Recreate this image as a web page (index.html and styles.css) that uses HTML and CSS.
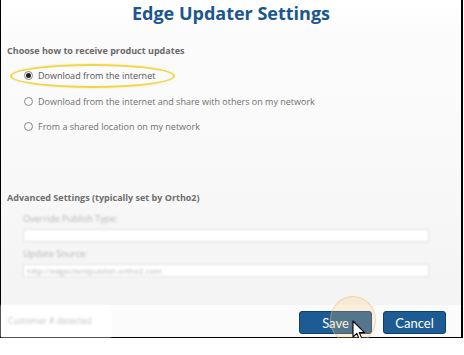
FILE: index.html
```html
<!DOCTYPE html>
<html lang="en">
<head>
    <meta charset="UTF-8">
    <title>Edge Updater Settings</title>
    <link rel="stylesheet" href="styles.css">
</head>
<body>
    <div class="frame">
        <header class="title-bar">
            <h1>Edge Updater Settings</h1>
        </header>

        <div class="content">
            <h2 class="section-title">Choose how to receive product updates</h2>
            <ul class="options">
                <li class="option selected"><span class="radio"></span>Download from the internet</li>
                <li class="option"><span class="radio"></span>Download from the internet and share with others on my network</li>
                <li class="option"><span class="radio"></span>From a shared location on my network</li>
            </ul>
            <div class="highlight"></div>

            <h2 class="section-title advanced">Advanced Settings (typically set by Ortho2)</h2>
            <div class="advanced-fields">
                <label class="field-label">Override Publish Type:</label>
                <div class="field-input"></div>
                <label class="field-label">Update Source:</label>
                <div class="field-input">http://edgeclientpublish.ortho2.com</div>
            </div>
        </div>

        <footer class="footer">
            <div class="status">Customer # detected</div>
            <div class="buttons">
                <button class="btn">Save</button>
                <button class="btn">Cancel</button>
            </div>
            <div class="click-ring"></div>
            <svg class="cursor" width="14" height="22" viewBox="0 0 14 22">
                <path d="M1 1 L1 17 L4.8 13.4 L7.6 20 L10 19 L7.3 12.6 L12.5 12.6 Z" fill="#fff" stroke="#000" stroke-width="1.1" stroke-linejoin="round"/>
            </svg>
        </footer>
    </div>
</body>
</html>
```

FILE: styles.css
```css
/* General Reset */
* {
    margin: 0;
    padding: 0;
    box-sizing: border-box;
}

body {
    font-family: 'Open Sans', 'Noto Sans', Arial, sans-serif;
    background-color: white;
    color: #666;
}

.frame {
    position: relative;
    width: 463px;
    height: 338px;
    border-left: 1px solid #000;
    border-right: 2px solid #000;
    border-bottom: 1px solid #000;
    background: linear-gradient(#ffffff 0, #fbfbfb 40px, #f9f9f9 150px, #f4f4f4 300px);
    display: flex;
    flex-direction: column;
}

.title-bar {
    height: 44px;
    text-align: center;
}

.title-bar h1 {
    font-size: 18px;
    font-weight: 700;
    color: #1b568d;
    line-height: 26px;
}

.content {
    position: relative;
    flex: 1;
    padding: 0 6px;
}

.section-title {
    font-size: 9px;
    font-weight: 700;
    color: #6a6a6a;
    line-height: 14px;
}

.options {
    list-style: none;
    margin-top: 5px;
}

.option {
    display: flex;
    align-items: center;
    font-size: 9px;
    color: #707070;
    height: 25.5px;
    padding-left: 17px;
}

.radio {
    width: 9px;
    height: 9px;
    border: 1px solid #888;
    border-radius: 50%;
    margin-right: 5px;
    display: flex;
    align-items: center;
    justify-content: center;
}

.selected .radio::after {
    content: "";
    width: 5px;
    height: 5px;
    border-radius: 50%;
    background: #222;
}

.selected {
    color: #555;
}

.highlight {
    position: absolute;
    left: 9px;
    top: 20px;
    width: 165px;
    height: 24px;
    border: 2.5px solid #f0d548;
    border-radius: 50%;
    box-shadow: 0 0 2px rgba(240, 210, 60, 0.6);
}

.section-title.advanced {
    margin-top: 51px;
    color: #6e6e6e;
}

.advanced-fields {
    padding: 8px 0 0 16px;
    filter: blur(0.9px);
}

.field-label {
    display: block;
    font-size: 9px;
    color: #b5b5b5;
    line-height: 12px;
    margin-bottom: 4px;
}

.field-input {
    width: 406px;
    height: 13px;
    background: white;
    border: 1px solid #e2e2e2;
    font-size: 8px;
    color: #b8b8b8;
    padding-left: 3px;
    line-height: 11px;
    margin-bottom: 6px;
}

.footer {
    position: relative;
    height: 32px;
    display: flex;
    justify-content: space-between;
    align-items: center;
    background: #fbfbfb;
}

.status {
    width: 110px;
    height: 100%;
    background: #ffffff;
    font-size: 8.5px;
    color: #c4c4c4;
    padding: 10px 0 0 7px;
    filter: blur(1px);
}

.buttons {
    display: flex;
    gap: 11px;
    padding-right: 15px;
    padding-top: 3px;
}

.btn {
    font-family: Lato, 'Open Sans', Arial, sans-serif;
    font-size: 13px;
    color: white;
    background-color: #1d5b93;
    border: 1px solid #0f3f6e;
    border-radius: 3px;
    height: 23px;
}

.btn:first-child {
    width: 73px;
}

.btn:last-child {
    width: 63px;
}

.click-ring {
    position: absolute;
    left: 329px;
    top: -9px;
    width: 46px;
    height: 48px;
    border-radius: 50%;
    background: rgba(250, 200, 120, 0.25);
    border: 1px solid rgba(230, 190, 120, 0.45);
}

.cursor {
    position: absolute;
    left: 351px;
    top: 15px;
}
```
